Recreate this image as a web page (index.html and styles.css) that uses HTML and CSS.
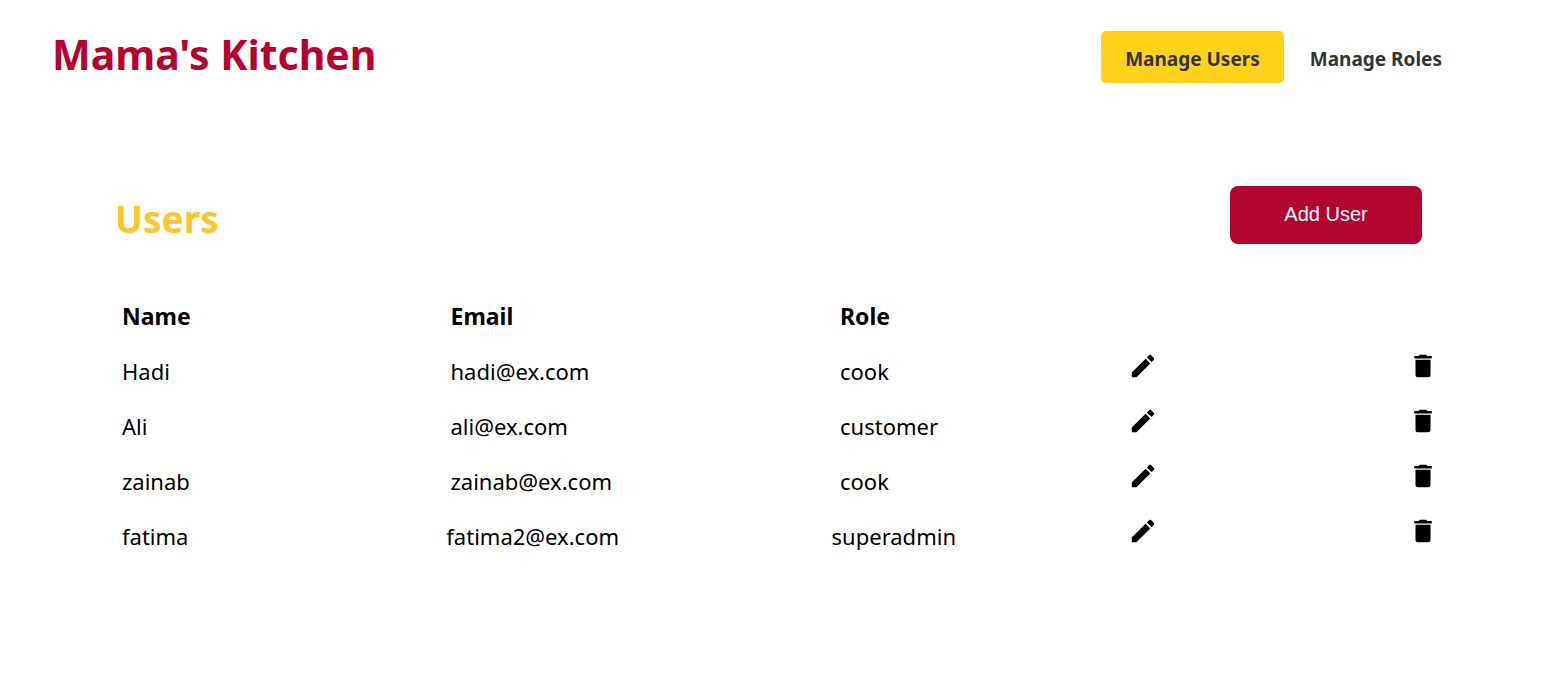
FILE: index.html
```
<!DOCTYPE html>
<html lang="en">
<head>
<meta charset="utf-8">
<title>Mama's Kitchen</title>
<link rel="stylesheet" href="styles.css">
</head>
<body>
<svg class="sprite" aria-hidden="true">
<symbol id="pencil" viewBox="0 0 24 24"><path d="M20.71 7.04c.39-.39.39-1.04 0-1.41l-2.34-2.34c-.37-.39-1.02-.39-1.41 0l-1.84 1.83 3.75 3.75M3 17.25V21h3.75L17.81 9.93l-3.75-3.75L3 17.25z"/></symbol>
<symbol id="trash" viewBox="0 0 24 24"><path d="M19 4h-3.5l-1-1h-5l-1 1H5v2h14M6 19a2 2 0 0 0 2 2h8a2 2 0 0 0 2-2V7H6v12z"/></symbol>
</svg>
<header class="topbar">
<h1 class="brand">Mama's Kitchen</h1>
<nav class="nav">
<a class="nav-link active" href="#users">Manage Users</a>
<a class="nav-link" href="#roles">Manage Roles</a>
</nav>
</header>
<main class="content">
<div class="section-head">
<h2 class="section-title">Users</h2>
<button class="add" type="button">Add User</button>
</div>
<table class="users">
<thead><tr><th class="name">Name</th><th class="email">Email</th><th class="role">Role</th><td class="edit"></td><td class="delete"></td></tr></thead>
<tbody>
<tr><td class="name">Hadi</td><td class="email">hadi@ex.com</td><td class="role">cook</td><td class="edit"><button class="icon" type="button" aria-label="Edit Hadi"><svg><use href="#pencil"/></svg></button></td><td class="delete"><button class="icon" type="button" aria-label="Delete Hadi"><svg><use href="#trash"/></svg></button></td></tr>
<tr><td class="name">Ali</td><td class="email">ali@ex.com</td><td class="role">customer</td><td class="edit"><button class="icon" type="button" aria-label="Edit Ali"><svg><use href="#pencil"/></svg></button></td><td class="delete"><button class="icon" type="button" aria-label="Delete Ali"><svg><use href="#trash"/></svg></button></td></tr>
<tr><td class="name">zainab</td><td class="email">zainab@ex.com</td><td class="role">cook</td><td class="edit"><button class="icon" type="button" aria-label="Edit zainab"><svg><use href="#pencil"/></svg></button></td><td class="delete"><button class="icon" type="button" aria-label="Delete zainab"><svg><use href="#trash"/></svg></button></td></tr>
<tr><td class="name">fatima</td><td class="email">fatima2@ex.com</td><td class="role">superadmin</td><td class="edit"><button class="icon" type="button" aria-label="Edit fatima"><svg><use href="#pencil"/></svg></button></td><td class="delete"><button class="icon" type="button" aria-label="Delete fatima"><svg><use href="#trash"/></svg></button></td></tr>
</tbody>
</table>
</main>
</body>
</html>
```
FILE: styles.css
```
* { box-sizing: border-box; }
body { margin: 0; background: #fff; color: #000; font-family: "Segoe UI", "Noto Sans", "Open Sans", sans-serif; }
.sprite { display: none; }
.topbar { display: flex; justify-content: space-between; align-items: center; padding: 24px 86px 24px 52px; }
.brand { margin: 0; color: #b3042f; font-size: 41px; line-height: 60px; font-weight: 700; }
.nav { display: flex; gap: 2px; margin-top: 6px; }
.nav-link { padding: 14px 24px 10px; border-radius: 5px; color: #333; font-size: 19px; line-height: 28px; font-weight: 700; text-decoration: none; white-space: nowrap; }
.nav-link:last-child { padding-right: 0; margin-right: 24px; }
.nav-link.active { background: #ffd21c; }
.content { padding: 78px 114px 0 115px; }
.section-head { display: flex; justify-content: space-between; padding-right: 16px; }
.section-title { margin: 6px 0 0; color: #ffc42c; font-size: 37px; line-height: 54px; font-weight: 700; }
.add { width: 192px; height: 58px; padding: 0 0 2px; border: 0; border-radius: 8px; background: #b3042f; color: #fff; font-family: "Liberation Sans", Arial, sans-serif; font-size: 20px; }
.users { display: block; margin-top: 44px; font-size: 22px; line-height: 32px; }
.users thead, .users tbody { display: block; }
.users tr { display: flex; height: 55px; }
.users th, .users td { display: block; padding: 10px 7px 0; text-align: left; }
.users th { font-size: 23px; }
.users .name { flex: 1 1 200px; }
.users .email { flex: 1 1 261px; }
.users .role { box-sizing: content-box; flex: 0 0 116px; padding-right: 165px; }
.users .edit { flex: 0 0 159px; padding-top: 6px; }
.users .delete { flex: 0 0 158px; padding: 6px 0 0; text-align: right; }
.icon { display: inline-flex; padding: 0; border: 0; background: none; vertical-align: top; cursor: pointer; }
.icon svg { width: 30px; height: 30px; }
```
